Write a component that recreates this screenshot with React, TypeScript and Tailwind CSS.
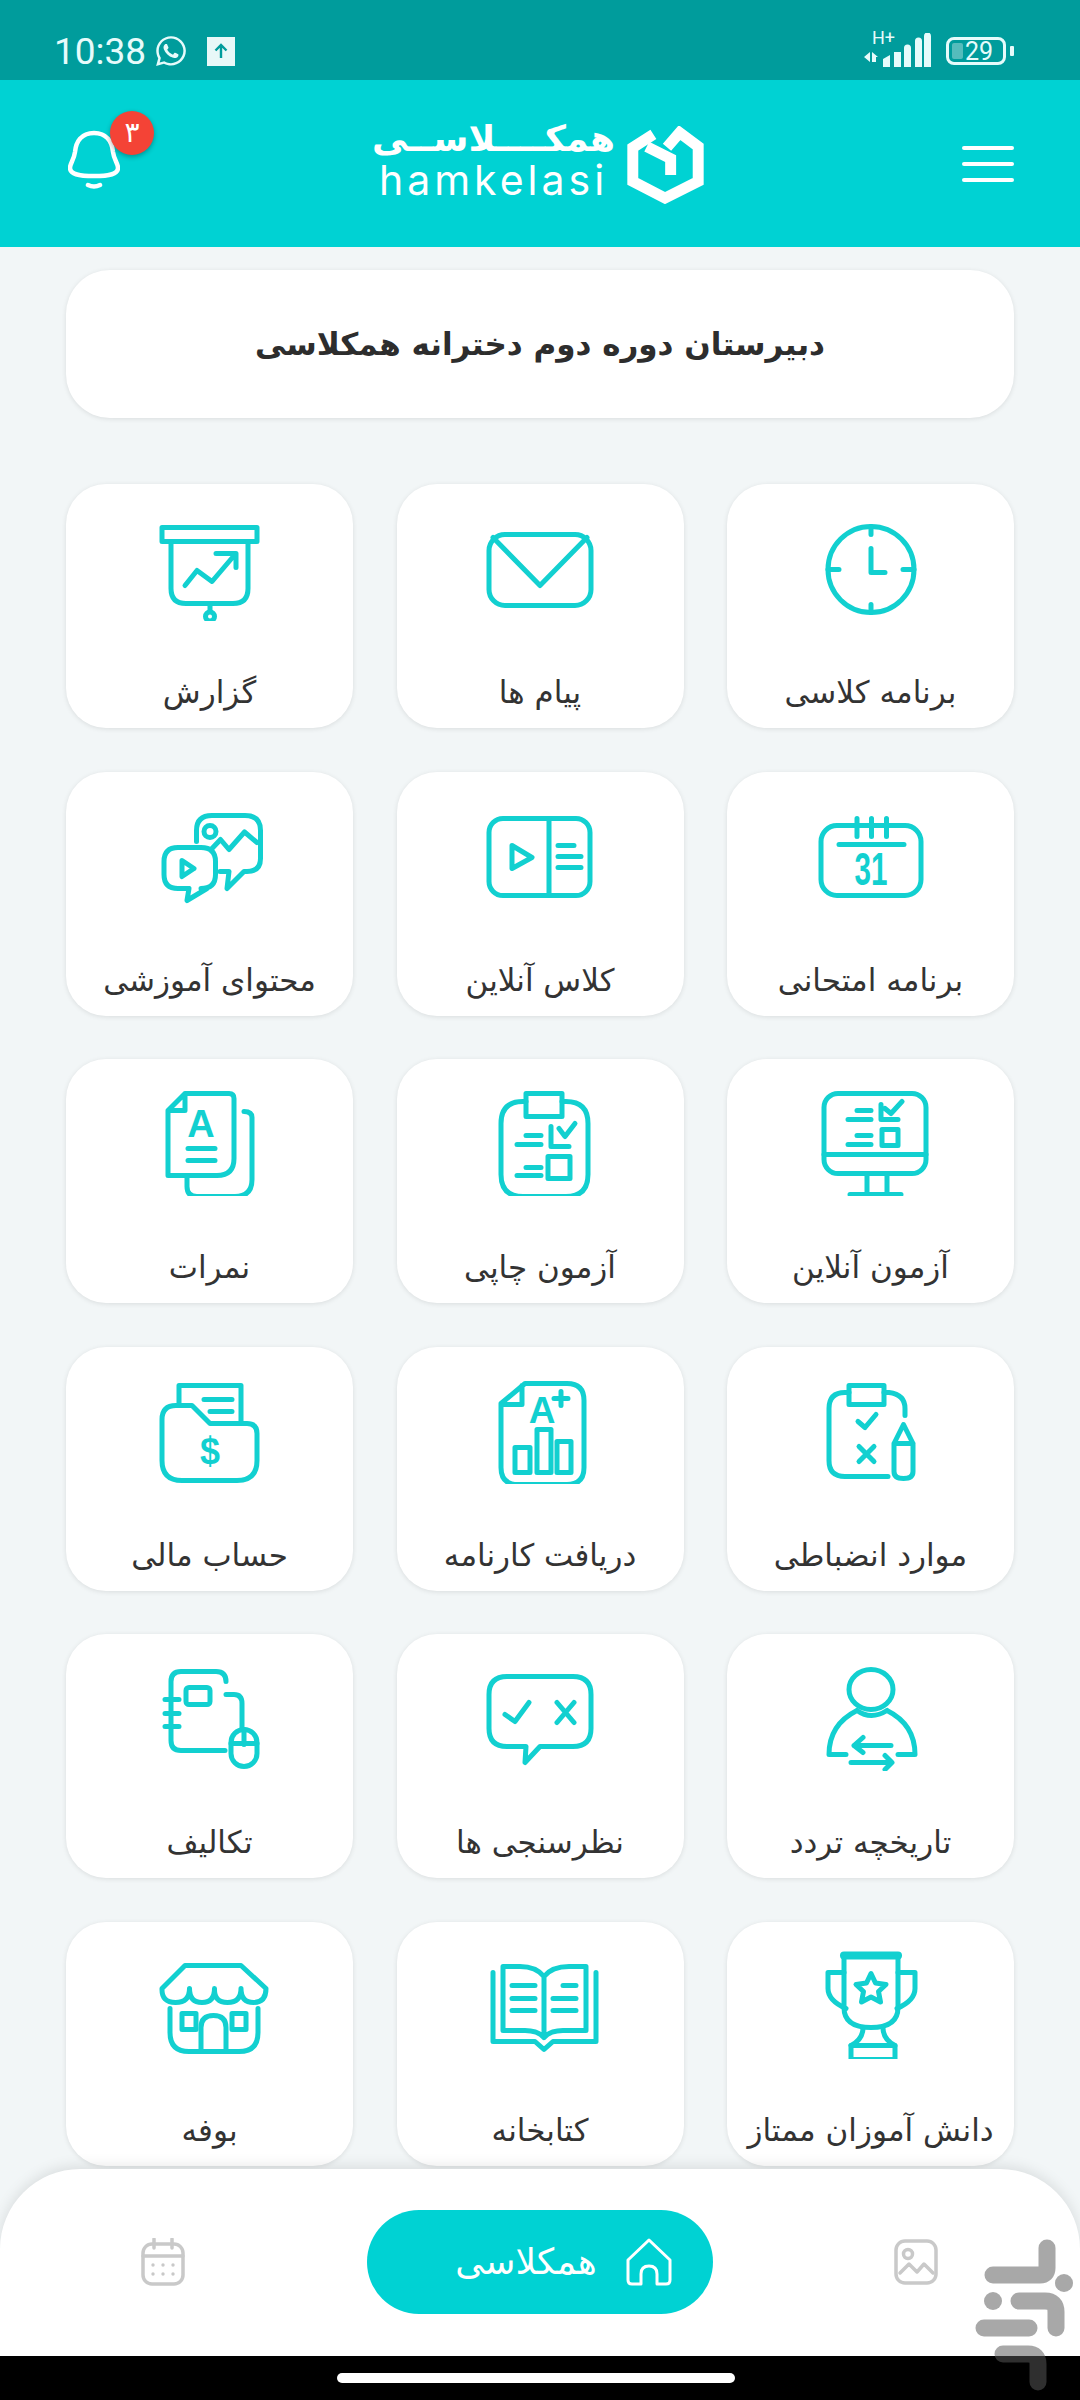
import type { ReactNode } from "react";
import { FaWhatsapp } from "react-icons/fa";

const TEAL = "#12d0d0";

function Ico({ children }: { children: ReactNode }) {
  return (
    <svg viewBox="0 0 120 120" fill="none" stroke={TEAL} strokeWidth={5} strokeLinecap="round" strokeLinejoin="round" className="w-[120px] h-[125px] shrink-0">
      {children}
    </svg>
  );
}

function IcoText({ x, y, size, children, w }: { x: number; y: number; size: number; children: ReactNode; w?: number }) {
  return (
    <text x={x} y={y} fontSize={size} fontWeight={700} fill={TEAL} stroke="none" textAnchor="middle" textLength={w} lengthAdjust={w ? "spacingAndGlyphs" : undefined} fontFamily="'Liberation Sans', sans-serif">
      {children}
    </text>
  );
}

const items: { label: string; icon: ReactNode }[] = [
  {
    label: "برنامه کلاسی",
    icon: (
      <Ico>
        <circle cx="60" cy="71" r="43" />
        <path d="M60 28v8M60 106v8M17 71h11M92 71h11M60 50v24h14" />
      </Ico>
    ),
  },
  {
    label: "پیام ها",
    icon: (
      <Ico>
        <rect x="9" y="36" width="102" height="71" rx="16" />
        <path d="M13 39l47 48 47-48" />
      </Ico>
    ),
  },
  {
    label: "گزارش",
    icon: (
      <Ico>
        <rect x="12" y="29" width="95" height="14" />
        <path d="M21 43v47q0 15 15 15h47q15 0 15-15V43M60 105v8" />
        <circle cx="60" cy="118" r="4.5" />
        <path d="M35 87l12-15 15 11 23-27M66 55h20v14" />
      </Ico>
    ),
  },
  {
    label: "برنامه امتحانی",
    icon: (
      <Ico>
        <rect x="10" y="39" width="100" height="70" rx="16" />
        <path d="M46 32v18M60.500 32v18M75.500 32v18M28 58h65" />
        <IcoText x={60} y={98} size={46} w={33}>31</IcoText>
      </Ico>
    ),
  },
  {
    label: "کلاس آنلاین",
    icon: (
      <Ico>
        <rect x="9" y="32" width="101" height="77" rx="14" />
        <path d="M69 32v77M32 59l20 12-20 11zM78 59h16M78 70h23M78 81h23" />
      </Ico>
    ),
  },
  {
    label: "محتوای آموزشی",
    icon: (
      <Ico>
        <path d="M46.500 55V44q0-15 15.500-15h33q15.500 0 15.500 15v28q0 13-13.500 13H94L77 102l2-17h-9" />
        <circle cx="60" cy="45" r="6" />
        <path d="M62 62l8.500-9 8.500 10 15.500-17.500L107 56" />
        <path d="M28 61h23q14.500 0 14.500 14v13q0 14-14.500 14h6L37 114l2-12H28q-14 0-14-14V75q0-14 14-14z" />
        <path d="M32 74l12 8-12 8z" />
      </Ico>
    ),
  },
  {
    label: "آزمون آنلاین",
    icon: (
      <Ico>
        <rect x="13" y="20" width="102" height="80" rx="14" />
        <path d="M13 81h102M56 100v21M76 100v21M39 121h51M46 37h14M37 46h23M46 62h14M37 71h23M70 31v15h17M74 35l6 5 11-12" />
        <rect x="71" y="56" width="16" height="16" />
      </Ico>
    ),
  },
  {
    label: "آزمون چاپی",
    icon: (
      <Ico>
        <path d="M46 28h-3q-22 0-22 22v51q0 22 22 22h43q22 0 22-22V50q0-22-22-22h-4" />
        <rect x="46" y="20" width="36" height="23" />
        <path d="M46 62h15M37 71h24M71 53v20h18M79 55l6 8 10-13M46 94h15M37 102h24" />
        <rect x="68" y="83" width="22" height="22" />
      </Ico>
    ),
  },
  {
    label: "نمرات",
    icon: (
      <Ico>
        <path d="M35 20h44q5 0 5 5v60q0 17-17 17H18V37zM35 20v17H18" />
        <path d="M94 38q8 0 8 6v62q0 17-17 17H47q-10 0-10-10V102" />
        <IcoText x={51} y={63} size={38}>A</IcoText>
        <path d="M38 75h27M38 87h27" />
      </Ico>
    ),
  },
  {
    label: "موارد انضباطی",
    icon: (
      <Ico>
        <path d="M38 31h-4q-16 0-16 16v52q0 16 16 16h43M73 31h5q16 2 16 16v7" />
        <rect x="38" y="24" width="35" height="19" />
        <path d="M47 60l7 6 11-13M48 85l15 15M63 85l-15 15" />
        <path d="M83 82l9.500-19L102 82zM83 82v28q0 7 9.500 7t9.500-7V82" />
      </Ico>
    ),
  },
  {
    label: "دریافت کارنامه",
    icon: (
      <Ico>
        <path d="M45 22h42q17 0 17 17v67q0 17-17 17H38q-17 0-17-17V42zM42 24v19H22" />
        <IcoText x={62} y={61} size={37}>A</IcoText>
        <path d="M81 30v14M74 37h14" />
        <rect x="35" y="86" width="15" height="25" />
        <rect x="57" y="68" width="14" height="43" />
        <rect x="77" y="80" width="14" height="31" />
      </Ico>
    ),
  },
  {
    label: "حساب مالی",
    icon: (
      <Ico>
        <path d="M29 43V24h62v38M54 38h28M60 50h22" />
        <path d="M12 58q0-14 14-14h16l18 18h37q10 0 10 10v27q0 20-20 20H32q-20 0-20-20z" />
        <IcoText x={60} y={102} size={38} w={20}>$</IcoText>
      </Ico>
    ),
  },
  {
    label: "تاریخچه تردد",
    icon: (
      <Ico>
        <ellipse cx="60" cy="41" rx="22" ry="20" />
        <path d="M35 106H18q0-30 28-44M87 106h17q0-30-28-44M46 62q14 10 30 0M80 97H43M52 89l-9 8 9 7M40 114h37M74 107l7 7-7 7" />
      </Ico>
    ),
  },
  {
    label: "نظرسنجی ها",
    icon: (
      <Ico>
        <path d="M27 28h66q18 0 18 18v34q0 18-18 18H60l-15 16 1-16H27q-18 0-18-18V46q0-18 18-18z" />
        <path d="M25 66l10 7 14-19M77 54l17 20M94 54L77 74" />
      </Ico>
    ),
  },
  {
    label: "تکالیف",
    icon: (
      <Ico>
        <path d="M76 33q0-10-10-10H31q-10 0-10 10v59q0 10 10 10h44" />
        <path d="M15 51h14M15 65h14M15 78h14" />
        <rect x="36" y="39" width="24" height="17" rx="3" />
        <path d="M76 46h8q8 0 8 9v26" />
        <rect x="81" y="81" width="26" height="37" rx="13" />
        <path d="M94 81v15M81 95h26" />
      </Ico>
    ),
  },
  {
    label: "دانش آموزان ممتاز",
    icon: (
      <Ico>
        <path d="M33 19h54v52q0 20-27 20t-27-20z" />
        <path d="M33 19h54" strokeWidth={8} />
        <path d="M33 36H17v16q0 12 18 20M87 36h17v16q0 12-18 20M52 91q0 12-12 18h44q-12-6-12-18" />
        <rect x="40" y="109" width="44" height="14" />
        <path d="M60 37l4.500 9.500 10.500 1.500-7.500 7 2 10.500-9.500-5-9.500 5 2-10.500-7.500-7 10.500-1.500z" />
      </Ico>
    ),
  },
  {
    label: "کتابخانه",
    icon: (
      <Ico>
        <path d="M13 36v69h42l9 8 9-8h43V36" />
        <path d="M64 40q-8-10-24-10H23v64h22q13 0 19 7 6-7 19-7h23V30H89q-17 0-25 10zM64 40v61" />
        <path d="M32 49h23M32 62h23M32 74h23M83 49h13M73 62h23M73 74h23" />
      </Ico>
    ),
  },
  {
    label: "بوفه",
    icon: (
      <Ico>
        <path d="M35 29h56l25 23q0 14-12.500 14T91 52q0 14-13.500 14T64.500 52q0 14-12.500 14T39.500 52q0 14-14 14T12 52z" />
        <path d="M20 72v24q0 19 19 19h50q19 0 19-19V72M51 115V91q0-12 12.500-12T76 91v24" />
        <rect x="32" y="77" width="14" height="16" />
        <rect x="82" y="77" width="14" height="16" />
      </Ico>
    ),
  },
];

const faFont = "font-['DejaVu_Sans',sans-serif]";

function MenuCard({ label, icon }: { label: string; icon: ReactNode }) {
  return (
    <div className="h-[244px] rounded-[40px] bg-white shadow-[0_1px_5px_rgba(0,0,0,0.1)] flex flex-col items-center pt-[12px]">
      {icon}
      <span className={`mt-[51px] text-[31px] leading-[40px] text-[#333] whitespace-nowrap ${faFont}`}>{label}</span>
    </div>
  );
}

function StatusBar() {
  return (
    <div className="h-[80px] bg-[#009c9c] flex items-center justify-between pl-[54px] pr-[66px] pt-[22px] font-['Roboto',sans-serif] text-[#e6fbfb]">
      <div className="flex items-center">
        <span className="text-[37px] leading-none">10:38</span>
        <FaWhatsapp className="ml-[8px] text-[34px]" />
        <div className="ml-[19px] w-[28px] h-[29px] bg-[#e8f8f8] flex items-center justify-center">
          <svg viewBox="0 0 20 20" className="w-[20px] h-[20px]" fill="none" stroke="#009c9c" strokeWidth={2.4}>
            <path d="M10 17V4M4.500 9.500L10 4l5.500 5.500" />
          </svg>
        </div>
      </div>
      <div className="flex items-center">
        <div className="relative w-[72px] h-[36px]">
          <span className="absolute left-[8px] -top-[6px] text-[18px] leading-[22px]">H+</span>
          <svg viewBox="0 0 72 36" className="w-[72px] h-[36px]" fill="#e6fbfb">
            <path d="M0 24l6-5v10zM8 19l6 5h-2v5H8z" />
            <path d="M19 26l7-4v12h-7zM30 19h7v15h-7zM40 15a3 3 0 0 1 7 0v19h-7zM51 8a3 3 0 0 1 7 0v26h-7zM60 3a3 3 0 0 1 7 0v31h-7z" />
          </svg>
        </div>
        <div className="relative ml-[10px] w-[60px] h-[28px] rounded-[8px] border-[3px] border-[#e6fbfb] flex items-center justify-center">
          <div className="absolute left-[3px] top-[3px] bottom-[3px] w-[11px] rounded-[2px] bg-[#55bcbc]" />
          <span className="relative text-[25px] leading-none ml-[6px]">29</span>
        </div>
        <div className="ml-[4px] w-[4px] h-[10px] rounded-[1px] bg-[#e6fbfb]" />
      </div>
    </div>
  );
}

function Header() {
  return (
    <div className="h-[167px] bg-[#00d2d3] flex items-center justify-between pl-[68px] pr-[66px]">
      <div className="relative w-[52px] h-[60px] -mt-[8px]">
        <svg viewBox="0 0 52 60" className="w-[52px] h-[60px]" fill="none" stroke="white" strokeWidth={4.5} strokeLinecap="round" strokeLinejoin="round">
          <path d="M26 3C13 3 8 12 7 22c-1 8-5 11-5 16 0 6 8 8 24 8s24-2 24-8c0-5-4-8-5-16C44 12 39 3 26 3z" />
          <path d="M20 55q6 3 12 0" />
        </svg>
        <span className="absolute -top-[19px] left-[42px] w-[44px] h-[44px] rounded-full bg-[#f44336] shadow-[0_2px_5px_rgba(0,0,0,0.3)] flex items-center justify-center text-white text-[28px] leading-none font-['DejaVu_Sans',sans-serif]">۳</span>
      </div>
      <div className="flex items-center gap-[15px] mt-[-2px]">
        <div className="w-[232px] flex flex-col items-center text-white">
          <span dir="rtl" className="text-[36px] leading-[36px] -mt-[5px] font-bold font-['DejaVu_Sans',sans-serif] whitespace-nowrap">همکــــلاســی</span>
          <span className="text-[41px] leading-[40px] mt-[3px] font-['Inter',sans-serif] tracking-[4px]">hamkelasi</span>
        </div>
        <svg viewBox="860 120 240 235" className="w-[80px] h-[78px] mt-[4px]" fill="none" stroke="white" strokeWidth={33} strokeLinejoin="miter">
          <path d="M945 145l-62 40v102l97 50 100-50V182l-56-42-38 44" />
          <path d="M925 182l72 36v50" />
        </svg>
      </div>
      <div className="w-[52px] flex flex-col gap-[12px]">
        <div className="h-[4px] rounded-full bg-white" />
        <div className="h-[4px] rounded-full bg-white" />
        <div className="h-[4px] rounded-full bg-white" />
      </div>
    </div>
  );
}

function BottomNav() {
  return (
    <div className="mt-[3px] h-[187px] rounded-t-[80px] bg-white shadow-[0_-3px_14px_rgba(0,0,0,0.1)] flex items-center justify-between pl-[141px] pr-[142px]">
      <svg viewBox="0 0 44 48" className="w-[44px] h-[48px]" fill="none" stroke="#c9c9c9" strokeWidth={3.500} strokeLinecap="round">
        <rect x="2" y="6" width="40" height="40" rx="9" />
        <path d="M2 18h40M13 1v9M31 1v9" />
        <g fill="#c9c9c9" stroke="none">
          <circle cx="12" cy="27" r="1.700" /><circle cx="22" cy="27" r="1.700" /><circle cx="32" cy="27" r="1.700" />
          <circle cx="12" cy="36" r="1.700" /><circle cx="22" cy="36" r="1.700" /><circle cx="32" cy="36" r="1.700" />
        </g>
      </svg>
      <div className="w-[346px] h-[104px] rounded-full bg-[#00d2d3] flex items-center justify-center gap-[29px] pl-[48px] text-white">
        <span className="text-[36px] leading-none font-['DejaVu_Sans',sans-serif]">همکلاسی</span>
        <svg viewBox="0 0 46 48" className="w-[46px] h-[48px] shrink-0" fill="none" stroke="white" strokeWidth={3} strokeLinejoin="round">
          <path d="M23 2L44 22v20q0 4-4 4h-9V36q0-8-8-8t-8 8v10H6q-4 0-4-4V22z" />
        </svg>
      </div>
      <svg viewBox="0 0 44 46" className="w-[44px] h-[46px]" fill="none" stroke="#c9c9c9" strokeWidth={3.500} strokeLinecap="round" strokeLinejoin="round">
        <rect x="2" y="2" width="40" height="42" rx="9" />
        <circle cx="14" cy="15" r="4.500" />
        <path d="M6 34l9-9 8 8 7-8 9 9" />
      </svg>
    </div>
  );
}

export default function App() {
  return (
    <div className="relative w-[1080px] h-[2400px] overflow-hidden bg-[#f2f6f7] flex flex-col">
      <StatusBar />
      <Header />
      <div className="mt-[23px] mx-[66px] h-[148px] rounded-[44px] bg-white shadow-[0_1px_5px_rgba(0,0,0,0.1)] flex items-center justify-center">
        <span dir="rtl" className={`text-[31px] font-bold text-[#2d2d2d] ${faFont}`}>دبیرستان دوره دوم دخترانه همکلاسی</span>
      </div>
      <div dir="rtl" className="mt-[66px] mx-[66px] grid grid-cols-3 gap-x-[43.500px] gap-y-[43.600px]">
        {items.map((it) => (
          <MenuCard key={it.label} label={it.label} icon={it.icon} />
        ))}
      </div>
      <BottomNav />
      <div className="h-[44px] bg-black flex items-center justify-center">
        <div className="w-[398px] h-[10px] mr-[8px] rounded-full bg-white" />
      </div>
      <svg className="absolute left-[960px] top-[2230px] w-[120px] h-[170px] opacity-[0.52]" viewBox="960 2230 120 170" fill="none" stroke="#5a5a5a" strokeWidth={17} strokeLinecap="round">
        <path d="M1047 2248v20q0 7-7 7h-47" />
        <path d="M1019 2301h26q11 0 11 11v16M984 2328h45M1003 2354h25q10 0 10 10v18" />
        <circle cx="1064" cy="2283" r="9" fill="#5a5a5a" stroke="none" />
        <circle cx="993" cy="2301" r="9" fill="#5a5a5a" stroke="none" />
      </svg>
    </div>
  );
}
